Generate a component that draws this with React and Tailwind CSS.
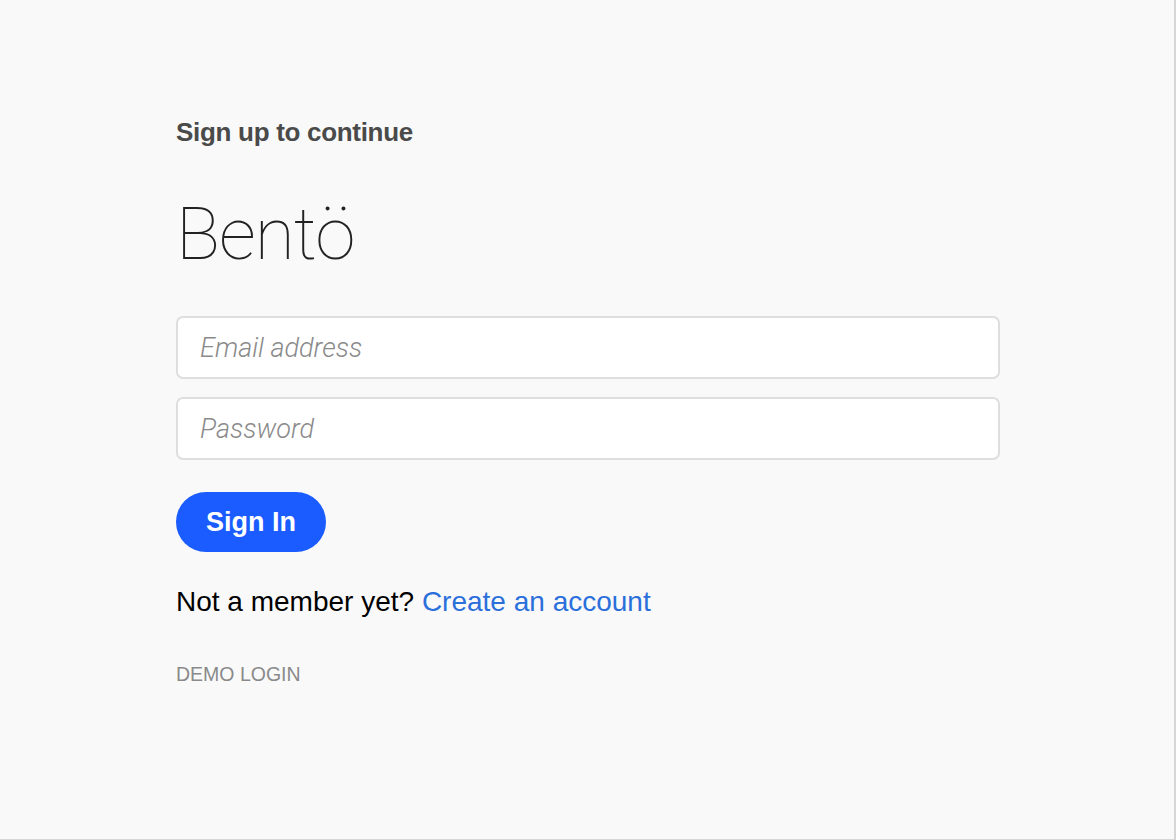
import React from 'react'

export default function App() {
  return (
    <div className="w-[1176px] h-[840px] bg-[#f9f9f9] border-r-2 border-b border-[#d6d6d6] font-['Liberation_Sans',Arial,sans-serif]">
      <div className="pl-[176px] pt-[116px] w-[1000px]">
        <h2 className="text-[26px] font-bold text-[#4a4a4a] leading-[32px] tracking-[-0.3px]">Sign up to continue</h2>

        <h1 className="mt-[44px] text-[73px] font-thin text-[#222] leading-[84px] font-['Roboto','Liberation_Sans',sans-serif] tracking-[-1px]">
          Bentö
        </h1>

        <form className="mt-[40px] flex flex-col gap-[18px]" onSubmit={(e) => e.preventDefault()}>
          <input
            type="email"
            placeholder="Email address"
            className="w-[824px] h-[63px] rounded-[7px] border-2 border-[#dedede] bg-white px-[22px] text-[27px] font-light italic text-[#333] placeholder:text-[#8a8a8a] outline-none font-['Roboto','Liberation_Sans',sans-serif]"
          />
          <input
            type="password"
            placeholder="Password"
            className="w-[824px] h-[63px] rounded-[7px] border-2 border-[#dedede] bg-white px-[22px] text-[27px] font-light italic text-[#333] placeholder:text-[#8a8a8a] outline-none font-['Roboto','Liberation_Sans',sans-serif]"
          />
          <button
            type="submit"
            className="mt-[14px] w-[150px] h-[60px] rounded-full bg-[#1a5cff] text-white text-[27px] font-bold"
          >
            Sign In
          </button>
        </form>

        <p className="mt-[33px] text-[28px] text-black leading-[34px]">
          Not a member yet?{' '}
          <a href="#" className="text-[#2b6fdb]">Create an account</a>
        </p>

        <p className="mt-[43px] text-[19.5px] text-[#8a8a8a] leading-[24px] uppercase">Demo login</p>
      </div>
    </div>
  )
}
